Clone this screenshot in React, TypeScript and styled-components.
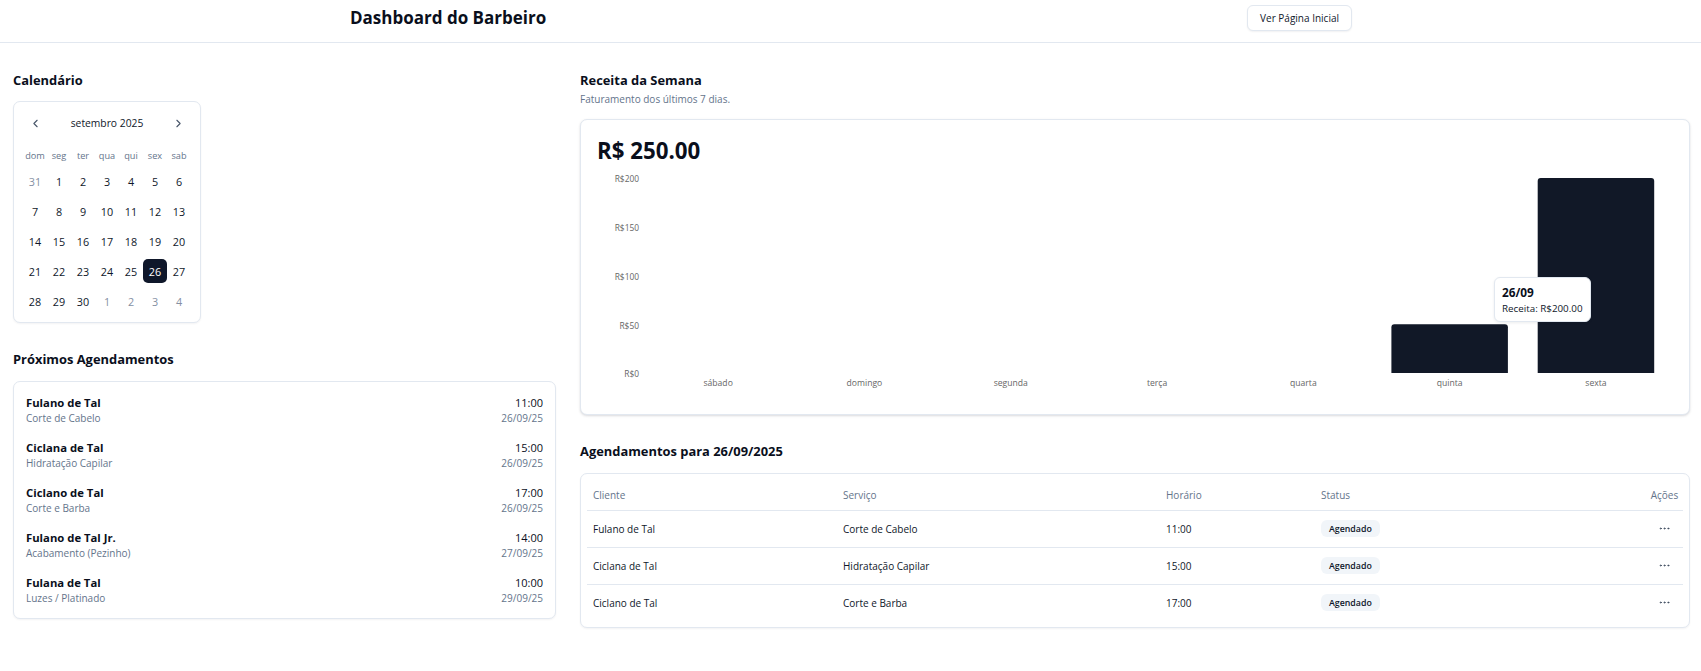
import React from "react";
import styled, { createGlobalStyle } from "styled-components";
import { ChevronLeft, ChevronRight, Ellipsis } from "lucide-react";

const GlobalStyle = createGlobalStyle`
  * { box-sizing: border-box; }
  body {
    margin: 0;
    background: #ffffff;
    color: #0f172a;
    font-family: "Open Sans", "Noto Sans", sans-serif;
  }
`;

const Header = styled.header`
  border-bottom: 1px solid #e2e8f0;
  padding: 5px 0 11px;
`;

const HeaderInner = styled.div`
  width: 1003px;
  margin: 0 auto;
  height: 26px;
  display: flex;
  align-items: center;
  justify-content: space-between;
`;

const PageTitle = styled.h1`
  margin: 0 0 0 1px;
  font-size: 17px;
  font-weight: 700;
  line-height: 26px;
  color: #0a0f1c;
`;

const OutlineButton = styled.button`
  height: 26px;
  padding: 0 12px;
  border: 1px solid #e2e8f0;
  border-radius: 6px;
  background: #fff;
  box-shadow: 0 1px 2px rgba(15, 23, 42, 0.06);
  font-family: inherit;
  font-size: 10px;
  font-weight: 500;
  color: #0f172a;
`;

const Main = styled.main`
  display: grid;
  grid-template-columns: repeat(3, 1fr);
  gap: 24px;
  padding: 26px 11px 26px 13px;
`;

const Column = styled.div<{ $span: number }>`
  grid-column: span ${(p) => p.$span};
  display: flex;
  flex-direction: column;
  gap: 25px;
  min-width: 0;
`;

const Section = styled.section`
  display: flex;
  flex-direction: column;
`;

const SectionTitle = styled.h2<{ $gap?: number }>`
  margin: 0 0 ${(p) => (p.$gap ?? 11)}px;
  font-size: 12.9px;
  font-weight: 700;
  line-height: 22px;
  color: #0a0f1c;
`;

const SectionSubtitle = styled.p`
  margin: 1px 0 13px;
  font-size: 10px;
  line-height: 14px;
  color: #64748b;
`;

const Card = styled.div`
  border: 1px solid #e2e8f0;
  border-radius: 7px;
  background: #fff;
  box-shadow: 0 1px 2px rgba(15, 23, 42, 0.05);
`;

/* Calendar */
const CalendarCard = styled(Card)`
  width: fit-content;
  padding: 9px;
`;

const CalendarNav = styled.div`
  display: flex;
  align-items: center;
  justify-content: space-between;
  height: 24px;
`;

const NavButton = styled.button`
  width: 24px;
  height: 24px;
  padding: 0;
  border: none;
  background: transparent;
  color: #475569;
  display: flex;
  align-items: center;
  justify-content: center;
`;

const MonthLabel = styled.span`
  font-size: 10.3px;
  font-weight: 500;
  color: #0f172a;
`;

const WeekRow = styled.div`
  display: grid;
  grid-template-columns: repeat(7, 24px);
  margin-top: 12px;
`;

const WeekDay = styled.span`
  font-size: 9.2px;
  line-height: 17px;
  text-align: center;
  color: #64748b;
`;

const DayGrid = styled.div`
  display: grid;
  grid-template-columns: repeat(7, 24px);
  row-gap: 6px;
  margin-top: 5px;
`;

const Day = styled.span<{ $outside?: boolean; $selected?: boolean }>`
  height: 24px;
  display: flex;
  align-items: center;
  justify-content: center;
  border-radius: 5px;
  font-size: 10.8px;
  color: ${(p) => (p.$selected ? "#ffffff" : p.$outside ? "#8590a3" : "#0f172a")};
  background: ${(p) => (p.$selected ? "#0f172a" : "transparent")};
`;

/* Upcoming list */
const ListCard = styled(Card)`
  padding: 13px 12px;
  display: flex;
  flex-direction: column;
  gap: 15px;
`;

const ListItem = styled.div`
  display: flex;
  justify-content: space-between;
  align-items: flex-start;
`;

const ItemCol = styled.div<{ $right?: boolean }>`
  display: flex;
  flex-direction: column;
  align-items: ${(p) => (p.$right ? "flex-end" : "flex-start")};
`;

const ItemName = styled.span`
  font-size: 11.3px;
  font-weight: 700;
  line-height: 16px;
  color: #0a0f1c;
`;

const ItemTime = styled.span`
  font-size: 11px;
  font-weight: 500;
  line-height: 16px;
  color: #0a0f1c;
`;

const ItemMeta = styled.span`
  font-size: 10px;
  line-height: 14px;
  color: #64748b;
`;

/* Revenue chart */
const RevenueCard = styled(Card)`
  padding: 16px;
  box-shadow: 0 1px 3px rgba(15, 23, 42, 0.1), 0 1px 2px rgba(15, 23, 42, 0.06);
`;

const Amount = styled.div`
  font-size: 22.3px;
  font-weight: 700;
  line-height: 29px;
  color: #0a0f1c;
`;

const ChartWrap = styled.div`
  position: relative;
  height: 233px;
`;

const ChartSvg = styled.svg`
  display: block;
  width: 100%;
  height: 233px;
  font-family: "Open Sans", sans-serif;
`;

const Tooltip = styled.div`
  position: absolute;
  left: 897px;
  top: 112px;
  padding: 6px 7px 5px;
  background: #fff;
  border: 1px solid #e2e8f0;
  border-radius: 6px;
  box-shadow: 0 1px 3px rgba(15, 23, 42, 0.08);
  display: flex;
  flex-direction: column;
`;

const TooltipTitle = styled.span`
  font-size: 11.8px;
  font-weight: 700;
  line-height: 17px;
  color: #0a0f1c;
`;

const TooltipText = styled.span`
  font-size: 9.8px;
  line-height: 15px;
  color: #0f172a;
`;

/* Table */
const TableCard = styled(Card)`
  padding: 6px;
`;

const Table = styled.table`
  width: 100%;
  border-collapse: collapse;
  table-layout: fixed;
`;

const Th = styled.th<{ $center?: boolean }>`
  height: 30px;
  padding: 0 ${(p) => (p.$center ? 0 : 6)}px;
  font-size: 10px;
  font-weight: 400;
  color: #64748b;
  text-align: ${(p) => (p.$center ? "center" : "left")};
  border-bottom: 1px solid #e2e8f0;
`;

const Tr = styled.tr`
  border-bottom: 1px solid #e2e8f0;
  &:last-child {
    border-bottom: none;
  }
`;

const Td = styled.td<{ $center?: boolean }>`
  height: 37px;
  padding: 0 ${(p) => (p.$center ? 0 : 6)}px;
  font-size: 10px;
  color: #0f172a;
  text-align: ${(p) => (p.$center ? "center" : "left")};
`;

const Badge = styled.span`
  display: inline-flex;
  align-items: center;
  height: 17px;
  padding: 0 8px;
  border-radius: 6px;
  background: #f1f5f9;
  font-size: 8.8px;
  font-weight: 600;
  color: #0f172a;
`;

const IconButton = styled.button`
  border: none;
  background: transparent;
  padding: 0;
  color: #334155;
  display: inline-flex;
  align-items: center;
  justify-content: center;
  width: 24px;
  height: 20px;
`;

const weekDays = ["dom", "seg", "ter", "qua", "qui", "sex", "sab"];
const calendarDays: { d: number; out?: boolean }[] = [
  { d: 31, out: true },
  ...Array.from({ length: 30 }, (_, i) => ({ d: i + 1 })),
  { d: 1, out: true },
  { d: 2, out: true },
  { d: 3, out: true },
  { d: 4, out: true },
];

const upcoming = [
  { name: "Fulano de Tal", service: "Corte de Cabelo", time: "11:00", date: "26/09/25" },
  { name: "Ciclana de Tal", service: "Hidratação Capilar", time: "15:00", date: "26/09/25" },
  { name: "Ciclano de Tal", service: "Corte e Barba", time: "17:00", date: "26/09/25" },
  { name: "Fulano de Tal Jr.", service: "Acabamento (Pezinho)", time: "14:00", date: "27/09/25" },
  { name: "Fulana de Tal", service: "Luzes / Platinado", time: "10:00", date: "29/09/25" },
];

const week = [
  { label: "sábado", value: 0 },
  { label: "domingo", value: 0 },
  { label: "segunda", value: 0 },
  { label: "terça", value: 0 },
  { label: "quarta", value: 0 },
  { label: "quinta", value: 50 },
  { label: "sexta", value: 200 },
];

const todays = [
  { client: "Fulano de Tal", service: "Corte de Cabelo", time: "11:00" },
  { client: "Ciclana de Tal", service: "Hidratação Capilar", time: "15:00" },
  { client: "Ciclano de Tal", service: "Corte e Barba", time: "17:00" },
];

const CHART_W = 1076;
const PLOT_X = 48;
const BAND = 146.3;
const ZERO_Y = 208;
const SCALE = 0.975;
const BAR_W = 116.5;

function barPath(x: number, y: number, w: number, h: number, r: number) {
  return `M${x},${y + h} L${x},${y + r} Q${x},${y} ${x + r},${y} L${x + w - r},${y} Q${x + w},${y} ${x + w},${y + r} L${x + w},${y + h} Z`;
}

function RevenueChart() {
  const ticks = [0, 50, 100, 150, 200];
  return (
    <ChartWrap>
      <ChartSvg viewBox={`0 0 ${CHART_W} 233`} preserveAspectRatio="none">
        {ticks.map((t) => (
          <text
            key={t}
            x={42}
            y={ZERO_Y - t * SCALE + 2}
            textAnchor="end"
            dominantBaseline="middle"
            fontSize={8.4}
            fill="#666666"
          >
            R${t}
          </text>
        ))}
        {week.map((w, i) => {
          const x = PLOT_X + i * BAND;
          const h = w.value * SCALE;
          return (
            <g key={w.label}>
              {w.value > 0 && (
                <path d={barPath(x + (BAND - BAR_W) / 2, ZERO_Y - h, BAR_W, h, 3)} fill="#111827" />
              )}
              <text
                x={x + BAND / 2}
                y={219}
                textAnchor="middle"
                dominantBaseline="middle"
                fontSize={8.6}
                fill="#666666"
              >
                {w.label}
              </text>
            </g>
          );
        })}
      </ChartSvg>
      <Tooltip>
        <TooltipTitle>26/09</TooltipTitle>
        <TooltipText>Receita: R$200.00</TooltipText>
      </Tooltip>
    </ChartWrap>
  );
}

export default function App() {
  return (
    <>
      <GlobalStyle />
      <Header>
        <HeaderInner>
          <PageTitle>Dashboard do Barbeiro</PageTitle>
          <OutlineButton>Ver Página Inicial</OutlineButton>
        </HeaderInner>
      </Header>
      <Main>
        <Column $span={1}>
          <Section>
            <SectionTitle $gap={10}>Calendário</SectionTitle>
            <CalendarCard>
              <CalendarNav>
                <NavButton aria-label="Mês anterior">
                  <ChevronLeft size={13} strokeWidth={2} />
                </NavButton>
                <MonthLabel>setembro 2025</MonthLabel>
                <NavButton aria-label="Próximo mês">
                  <ChevronRight size={13} strokeWidth={2} />
                </NavButton>
              </CalendarNav>
              <WeekRow>
                {weekDays.map((w) => (
                  <WeekDay key={w}>{w}</WeekDay>
                ))}
              </WeekRow>
              <DayGrid>
                {calendarDays.map((c, i) => (
                  <Day key={i} $outside={c.out} $selected={!c.out && c.d === 26}>
                    {c.d}
                  </Day>
                ))}
              </DayGrid>
            </CalendarCard>
          </Section>
          <Section>
            <SectionTitle>Próximos Agendamentos</SectionTitle>
            <ListCard>
              {upcoming.map((u) => (
                <ListItem key={u.name}>
                  <ItemCol>
                    <ItemName>{u.name}</ItemName>
                    <ItemMeta>{u.service}</ItemMeta>
                  </ItemCol>
                  <ItemCol $right>
                    <ItemTime>{u.time}</ItemTime>
                    <ItemMeta>{u.date}</ItemMeta>
                  </ItemCol>
                </ListItem>
              ))}
            </ListCard>
          </Section>
        </Column>
        <Column $span={2}>
          <Section>
            <SectionTitle $gap={0}>Receita da Semana</SectionTitle>
            <SectionSubtitle>Faturamento dos últimos 7 dias.</SectionSubtitle>
            <RevenueCard>
              <Amount>R$ 250.00</Amount>
              <RevenueChart />
            </RevenueCard>
          </Section>
          <Section>
            <SectionTitle>Agendamentos para 26/09/2025</SectionTitle>
            <TableCard>
              <Table>
                <colgroup>
                  <col style={{ width: 250 }} />
                  <col style={{ width: 323 }} />
                  <col style={{ width: 155 }} />
                  <col />
                  <col style={{ width: 37 }} />
                </colgroup>
                <thead>
                  <tr>
                    <Th>Cliente</Th>
                    <Th>Serviço</Th>
                    <Th>Horário</Th>
                    <Th>Status</Th>
                    <Th $center>Ações</Th>
                  </tr>
                </thead>
                <tbody>
                  {todays.map((r) => (
                    <Tr key={r.client}>
                      <Td>{r.client}</Td>
                      <Td>{r.service}</Td>
                      <Td>{r.time}</Td>
                      <Td>
                        <Badge>Agendado</Badge>
                      </Td>
                      <Td $center>
                        <IconButton aria-label="Ações">
                          <Ellipsis size={13} strokeWidth={1.5} />
                        </IconButton>
                      </Td>
                    </Tr>
                  ))}
                </tbody>
              </Table>
            </TableCard>
          </Section>
        </Column>
      </Main>
    </>
  );
}
